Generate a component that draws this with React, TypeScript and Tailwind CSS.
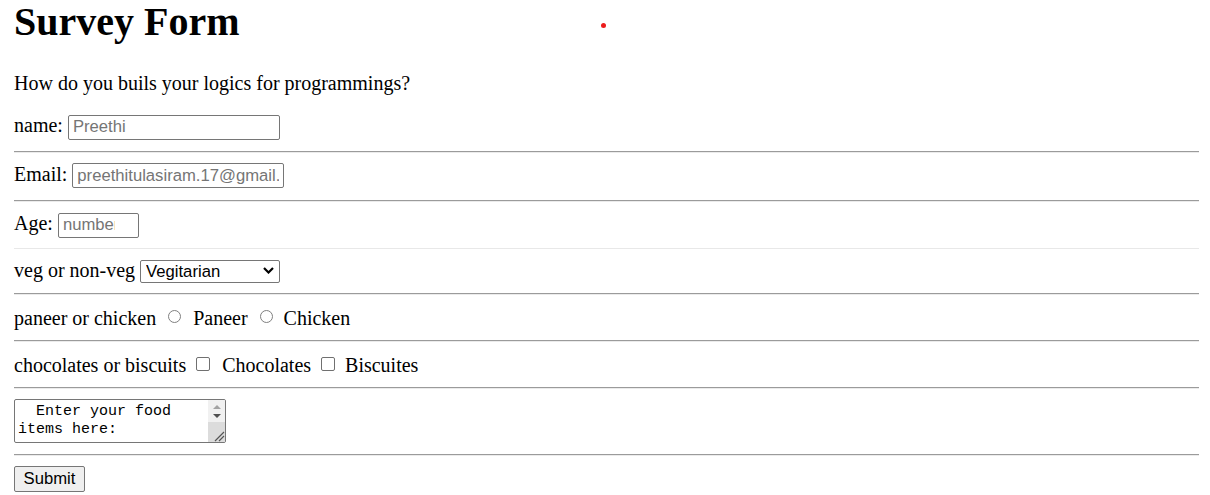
import React from "react";

const serif = { fontFamily: '"Liberation Serif", "Times New Roman", serif' };

function Hr() {
  return <div className="h-[2px] border-t border-t-[#9b9b9b] border-b border-b-[#ebebeb]" />;
}

export default function App() {
  const inputCls =
    "h-[25px] w-[212px] border border-[#767676] rounded-[2px] pl-[4px] pr-[4px] bg-white text-[16.67px] leading-[normal] text-black placeholder:text-[#757575] outline-none font-['Liberation_Sans',Arial,sans-serif]";
  return (
    <div
      className="relative bg-white text-black text-[20px] leading-[22px] pl-[14px] pr-[11px] min-h-[495px]"
      style={serif}
    >
      <div className="absolute left-[601px] top-[23px] w-[5px] h-[5px] rounded-full bg-[#ec1c1c]" />
      <h1 className="text-[40px] font-bold leading-[44px]">Survey Form</h1>
      <p className="mt-[28px]">How do you buils your logics for programmings?</p>

      <div className="mt-[20px] flex items-baseline">
        <span>name:</span>
        <input className={`${inputCls} ml-[5px]`} placeholder="Preethi" />
      </div>
      <div className="mt-[11px]">
        <Hr />
      </div>

      <div className="mt-[10px] flex items-baseline">
        <span>Email:</span>
        <input className={`${inputCls} ml-[5px]`} placeholder="preethitulasiram.17@gmail.com" />
      </div>
      <div className="mt-[12px]">
        <Hr />
      </div>

      <div className="mt-[10px] flex items-baseline">
        <span>Age:</span>
        <input
          className="ml-[5px] h-[25px] w-[81px] border border-[#767676] rounded-[2px] pl-[4px] pr-[23px] bg-white text-[16.67px] leading-[normal] text-black placeholder:text-[#757575] outline-none font-['Liberation_Sans',Arial,sans-serif]"
          placeholder="number"
        />
      </div>
      <div className="mt-[10px] h-[1px] bg-[#e8e8e8]" />

      <div className="mt-[10px] flex items-baseline">
        <span>veg or non-veg</span>
        <div className="relative ml-[5px]">
          <select className="appearance-none h-[23px] w-[140px] border border-[#767676] rounded-[2px] pl-[5px] bg-white text-[16.67px] leading-[normal] text-black outline-none font-['Liberation_Sans',Arial,sans-serif]">
            <option>Vegitarian</option>
            <option>Non-Vegitarian</option>
          </select>
          <svg
            className="absolute right-[6px] top-[8px] pointer-events-none"
            width="11"
            height="7"
            viewBox="0 0 11 7"
          >
            <path d="M1 1 L5.5 5.5 L10 1" fill="none" stroke="#000" strokeWidth="2.2" />
          </svg>
        </div>
      </div>
      <div className="mt-[10px]">
        <Hr />
      </div>

      <div className="mt-[12px] flex items-start h-[22px]">
        <span>paneer or chicken</span>
        <input
          type="radio"
          name="food"
          className="appearance-none ml-[12px] mt-[3.5px] w-[13px] h-[13px] rounded-full border border-[#7f7f7f] bg-white"
        />
        <span className="ml-[12px]">Paneer</span>
        <input
          type="radio"
          name="food"
          className="appearance-none ml-[12px] mt-[3.5px] w-[13px] h-[13px] rounded-full border border-[#7f7f7f] bg-white"
        />
        <span className="ml-[11px]">Chicken</span>
      </div>
      <div className="mt-[11px]">
        <Hr />
      </div>

      <div className="mt-[12px] flex items-start h-[22px]">
        <span>chocolates or biscuits</span>
        <input
          type="checkbox"
          className="appearance-none ml-[10px] mt-[3px] w-[14px] h-[14px] rounded-[2px] border border-[#707070] bg-white"
        />
        <span className="ml-[12px]">Chocolates</span>
        <input
          type="checkbox"
          className="appearance-none ml-[10px] mt-[3px] w-[14px] h-[14px] rounded-[2px] border border-[#707070] bg-white"
        />
        <span className="ml-[10px]">Biscuites</span>
      </div>
      <div className="mt-[11px]">
        <Hr />
      </div>

      <div className="mt-[10px] flex w-[212px] h-[44px] border border-[#767676] rounded-[2px] overflow-hidden bg-white">
        <textarea
          className="flex-1 min-w-0 resize-none overflow-hidden pl-[3px] pr-[2px] pt-[3px] text-[15px] leading-[18px] text-black outline-none whitespace-pre-wrap font-['Liberation_Mono','Courier_New',monospace]"
          defaultValue={"  Enter your food items here:"}
        />
        <div className="w-[17px] flex flex-col">
          <div className="h-[22px] bg-[#f1f1f1] flex flex-col items-center pt-[5px] gap-[5px]">
            <svg width="8" height="4" viewBox="0 0 8 4">
              <path d="M0 4 L4 0 L8 4 Z" fill="#a3a3a3" />
            </svg>
            <svg width="8" height="4" viewBox="0 0 8 4">
              <path d="M0 0 L8 0 L4 4 Z" fill="#505050" />
            </svg>
          </div>
          <div className="flex-1 bg-[#dcdcdc] flex items-end justify-end">
            <svg width="12" height="12" viewBox="0 0 12 12">
              <path d="M2 11 L11 2 M6 11 L11 6" stroke="#555" strokeWidth="1.2" fill="none" />
            </svg>
          </div>
        </div>
      </div>
      <div className="mt-[11px]">
        <Hr />
      </div>

      <button className="mt-[10px] h-[26px] w-[71px] border border-[#767676] rounded-[2px] bg-[#efefef] text-[16.67px] leading-[normal] text-black font-['Liberation_Sans',Arial,sans-serif]">
        Submit
      </button>
    </div>
  );
}
